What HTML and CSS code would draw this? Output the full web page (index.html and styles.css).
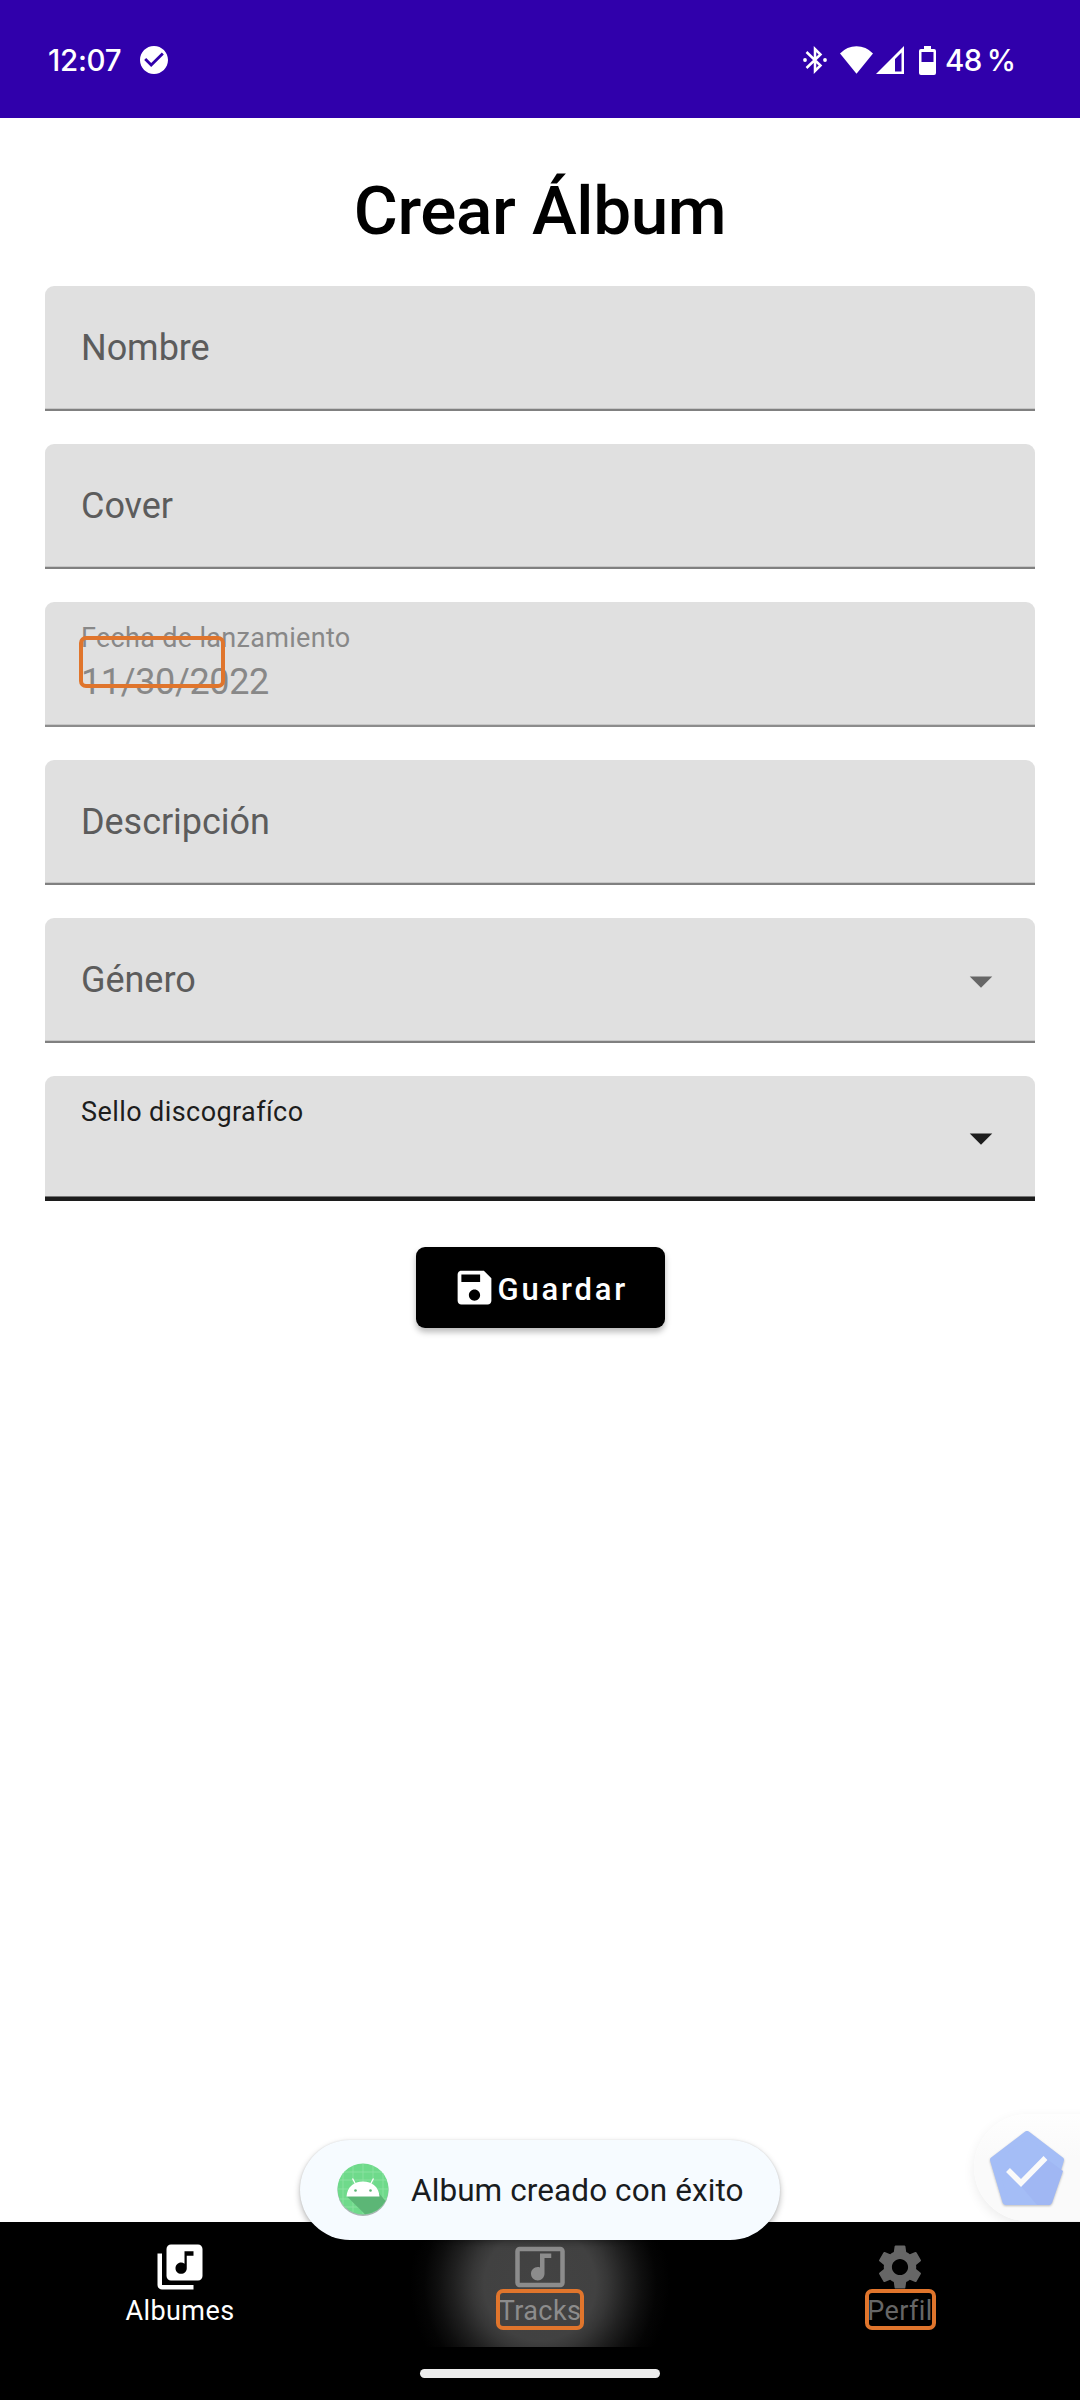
FILE: index.html
```html
<!DOCTYPE html>
<html lang="es">
<head>
<meta charset="utf-8">
<title>Crear Álbum</title>
<link rel="stylesheet" href="styles.css">
</head>
<body>
<div class="screen">
  <header class="status">
    <div class="status-left">
      <span class="clock">12:07</span>
      <svg class="ic-check" viewBox="2 2 20 20"><path fill="#fff" d="M12 2C6.48 2 2 6.48 2 12s4.48 10 10 10 10-4.48 10-10S17.52 2 12 2zm-2 15l-5-5 1.41-1.41L10 14.17l7.59-7.59L19 8l-9 9z"/></svg>
    </div>
    <div class="status-right">
      <svg class="ic-bt" viewBox="0 0 24 28" fill="none" stroke="#fff" stroke-width="2.5"><path d="M3.5 6 L17.5 19.5 L12 25 V3 L17.5 8.5 L3.5 22"/><circle cx="2" cy="14" r="1.9" fill="#fff" stroke="none"/><circle cx="22" cy="14" r="1.9" fill="#fff" stroke="none"/></svg>
      <svg class="ic-wifi" viewBox="0 0 33 28"><path fill="#fff" d="M0 7.5Q7 0.3 16.5 0.3T33 7.5L16.5 27.7z"/></svg>
      <svg class="ic-signal" viewBox="0 0 28 28"><path fill="#fff" fill-rule="evenodd" d="M28 0V28H0zM25.5 6.5L19 13V25.5H25.5z"/></svg>
      <svg class="ic-battery" viewBox="0 0 17 29"><path fill="#fff" fill-rule="evenodd" d="M5 0h7v3h3a2 2 0 0 1 2 2v22a2 2 0 0 1-2 2H2a2 2 0 0 1-2-2V5a2 2 0 0 1 2-2h3zM2.500 6v10h12V6z"/></svg>
      <span class="percent">48 %</span>
    </div>
  </header>

  <main class="content">
    <h1 class="title">Crear Álbum</h1>
    <form class="form">
      <div class="field"><span class="label">Nombre</span></div>
      <div class="field"><span class="label">Cover</span></div>
      <div class="field filled disabled">
        <span class="caption">Fecha de lanzamiento</span>
        <span class="value">11/30/2022</span>
        <i class="mark mark-date"></i>
      </div>
      <div class="field"><span class="label">Descripción</span></div>
      <div class="field">
        <span class="label">Género</span>
        <svg class="arrow" viewBox="0 0 24 24"><path fill="currentColor" d="M7 10l5 5 5-5z"/></svg>
      </div>
      <div class="field filled focused">
        <span class="caption">Sello discografíco</span>
        <svg class="arrow" viewBox="0 0 24 24"><path fill="currentColor" d="M7 10l5 5 5-5z"/></svg>
      </div>
      <button class="save" type="button">
        <svg class="save-icon" viewBox="0 0 24 24"><path fill="currentColor" d="M17 3H5c-1.110 0-2 .9-2 2v14c0 1.100.89 2 2 2h14c1.100 0 2-.9 2-2V7l-4-4zm-5 16c-1.660 0-3-1.340-3-3s1.340-3 3-3 3 1.340 3 3-1.340 3-3 3zm3-10H5V5h10v4z"/></svg>
        <span class="save-text">Guardar</span>
      </button>
    </form>
  </main>

  <nav class="nav">
    <div class="tabs">
      <a class="tab active">
        <svg class="tab-icon" viewBox="0 0 24 24"><path fill="currentColor" d="M20 2H8c-1.100 0-2 .9-2 2v12c0 1.100.9 2 2 2h12c1.100 0 2-.9 2-2V4c0-1.100-.9-2-2-2zm-2 5h-3v5.500c0 1.380-1.120 2.500-2.500 2.500S10 13.880 10 12.500s1.120-2.500 2.500-2.500c.57 0 1.080.19 1.500.51V5h4v2zM4 6H2v14c0 1.100.9 2 2 2h14v-2H4V6z"/></svg>
        <span class="tab-label">Albumes</span>
      </a>
      <a class="tab pressed">
        <svg class="tab-icon" viewBox="0 0 24 24"><path fill="currentColor" d="M21 3H3c-1.110 0-2 .89-2 2v14c0 1.100.89 2 2 2h18c1.100 0 2-.9 2-2V5c0-1.110-.9-2-2-2zm0 16H3V5h18v14zM8 15c0-1.660 1.340-3 3-3 .35 0 .69.07 1 .18V6h5v2h-3v7.030c-.02 1.640-1.350 2.970-3 2.970-1.660 0-3-1.340-3-3z"/></svg>
        <span class="tab-label">Tracks</span>
        <i class="mark mark-tracks"></i>
      </a>
      <a class="tab">
        <svg class="tab-icon" viewBox="0 0 24 24"><path fill="currentColor" d="M19.140,12.940c0.040-0.300,0.060-0.610,0.060-0.940c0-0.320-0.020-0.640-0.070-0.940l2.030-1.580c0.180-0.140,0.230-0.410,0.120-0.610l-1.920-3.320c-0.120-0.220-0.370-0.290-0.590-0.220l-2.390,0.960c-0.500-0.380-1.030-0.700-1.620-0.940L14.400,2.810c-0.040-0.240-0.240-0.410-0.480-0.410h-3.840c-0.240,0-0.430,0.170-0.470,0.410L9.250,5.350C8.660,5.590,8.120,5.920,7.630,6.290L5.240,5.330c-0.220-0.080-0.470,0-0.590,0.220L2.740,8.870C2.620,9.080,2.660,9.340,2.860,9.480l2.030,1.580C4.840,11.360,4.800,11.690,4.800,12s0.020,0.640,0.070,0.940l-2.030,1.580c-0.180,0.140-0.230,0.410-0.120,0.610l1.920,3.320c0.120,0.220,0.370,0.290,0.590,0.220l2.390-0.960c0.500,0.380,1.030,0.700,1.620,0.940l0.360,2.540c0.050,0.240,0.240,0.410,0.480,0.410h3.840c0.240,0,0.440-0.170,0.470-0.410l0.360-2.540c0.590-0.240,1.130-0.560,1.620-0.940l2.390,0.960c0.220,0.080,0.470,0,0.590-0.220l1.920-3.320c0.120-0.220,0.070-0.470-0.120-0.610L19.140,12.940z M12,15.600c-1.980,0-3.600-1.620-3.600-3.600s1.620-3.600,3.600-3.600s3.600,1.620,3.600,3.600S13.980,15.600,12,15.600z"/></svg>
        <span class="tab-label">Perfil</span>
        <i class="mark mark-perfil"></i>
      </a>
    </div>
    <div class="home-bar"></div>
  </nav>

  <div class="float-badge">
    <svg class="pentagon" viewBox="0 0 74 76">
      <path fill="#a4bdf6" stroke="#a4bdf6" stroke-width="6" stroke-linejoin="round" d="M37 4L71 30L58.5 72H15.5L3 30z"/>
      <path fill="#a0b7f3" d="M55.5 28L73 41L62 73L60 75H47L31 56z"/>
      <path fill="none" stroke="#fafafa" stroke-width="5.5" d="M18 40L31 53L55.5 28"/>
    </svg>
  </div>

  <div class="toast">
    <svg class="app-icon" viewBox="0 0 52 54">
      <circle cx="26" cy="27.5" r="25.5" fill="#a9b5b3"/>
      <circle cx="26" cy="26" r="25.5" fill="#6fda8b"/>
      <path d="M16 3V49M26 1V51M36 3V49M6 10V42M46 10V42M7 9H45M2 17H50M1 26H51M2 36H50M7 44H45" stroke="#8fe3a5" stroke-width="0.8" fill="none"/>
      <path fill="#5cb676" d="M10 33.5L28 51.3Q42 49.5 48.5 38L41.5 29.5z"/>
      <path fill="#fff" d="M9.500 33.500C10 24 17 18.500 26 18.500S42 24 42.500 33.500z"/>
      <path stroke="#fff" stroke-width="1.3" d="M18.5 21L15.5 15.5M33.5 21L36.5 15.5"/>
      <circle cx="18.5" cy="27.5" r="1.3" fill="#5cb676"/><circle cx="33.5" cy="27.5" r="1.3" fill="#5cb676"/>
    </svg>
    <span class="toast-text">Album creado con éxito</span>
  </div>
</div>
</body>
</html>
```
FILE: styles.css
```css
body {
  margin: 0;
  font-family: Roboto, sans-serif;
  background: #fff;
}

.screen {
  position: relative;
  display: flex;
  flex-direction: column;
  width: 1080px;
  height: 2400px;
  overflow: hidden;
}

svg {
  display: block;
  flex: none;
}

/* Status bar */
.status {
  display: flex;
  justify-content: space-between;
  flex: none;
  box-sizing: border-box;
  height: 118px;
  padding: 0 65px 0 48px;
  background: #3000ab;
  color: #fff;
  font-family: Inter, sans-serif;
  font-size: 29.5px;
  font-weight: 500;
  line-height: 36px;
}

.status-left,
.status-right {
  display: flex;
  align-items: center;
  height: 120px;
}

.clock { width: 92px; letter-spacing: -0.25px; }
.percent { width: 70px; letter-spacing: -0.5px; word-spacing: -2.5px; white-space: nowrap; }
.ic-check { width: 28px; height: 28px; }
.ic-bt { width: 24px; height: 28px; margin-right: 13px; }
.ic-wifi { width: 33px; height: 28px; margin-right: 3px; }
.ic-signal { width: 28px; height: 28px; margin-right: 15px; }
.ic-battery { width: 17px; height: 29px; margin-right: 9px; }

/* Form */
.content {
  flex: 1;
  padding: 0 45px;
}

.title {
  margin: 53px 0 36px;
  font-size: 67.5px;
  font-weight: 500;
  line-height: 79px;
  letter-spacing: -0.38px;
  text-align: center;
  color: #000;
}

.form {
  display: flex;
  flex-direction: column;
  gap: 33px;
}

.field {
  position: relative;
  display: flex;
  align-items: center;
  justify-content: space-between;
  box-sizing: border-box;
  height: 125px;
  padding: 0 27px 0 36px;
  border-radius: 9px 9px 0 0;
  background: linear-gradient(#808080, #808080) 0 100% / 100% 2px no-repeat,
              linear-gradient(#c6c6c6, #c6c6c6) 0 100% / 100% 3px no-repeat, #e0e0e0;
  color: #5c5c5c;
}

.label,
.value {
  font-size: 36px;
  line-height: 42px;
  letter-spacing: -0.05px;
}

.label { margin-bottom: 1px; }

.value {
  margin-top: 7px;
  letter-spacing: -0.36px;
}

.caption {
  font-size: 27px;
  line-height: 32px;
  letter-spacing: 0.31px;
}

.filled {
  flex-direction: column;
  align-items: flex-start;
  justify-content: flex-start;
  padding-top: 20px;
}

.disabled {
  background: linear-gradient(#8c8c8c, #8c8c8c) 0 100% / 100% 2px no-repeat,
              linear-gradient(#c6c6c6, #c6c6c6) 0 100% / 100% 3px no-repeat, #e0e0e0;
  color: #888;
}

.focused {
  flex-direction: row;
  justify-content: space-between;
  background: linear-gradient(#1c1c1c, #1c1c1c) 0 100% / 100% 4px no-repeat,
              linear-gradient(#777, #777) 0 100% / 100% 5px no-repeat, #e0e0e0;
  color: #1d1d1d;
}

.focused .caption { letter-spacing: 0.42px; }

.arrow {
  width: 54px;
  height: 54px;
  color: #666;
}

.focused .arrow {
  margin-top: 15px;
  color: #1d1d1d;
}

.save {
  display: flex;
  align-items: center;
  align-self: center;
  width: 249px;
  height: 81px;
  margin-top: 13px;
  padding: 0 0 0 36px;
  border: 0;
  border-radius: 9px;
  background: #000;
  color: #fff;
  font: 500 31px/36px Roboto, sans-serif;
  letter-spacing: 2.8px;
  box-shadow: 0 4px 6px rgba(0, 0, 0, 0.28);
}

.save-icon {
  width: 45px;
  height: 45px;
}

.save-text { padding: 4px 0 0 1px; }

/* Accessibility outlines */
.mark {
  position: absolute;
  box-sizing: border-box;
  border: 4px solid #e0752c;
  border-radius: 7px;
}

.mark-date { left: 34px; top: 34px; width: 146px; height: 52px; }
.mark-tracks { left: 136px; top: 67px; width: 88px; height: 41px; }
.mark-perfil { left: 145px; top: 67px; width: 71px; height: 41px; }

/* Bottom navigation */
.nav {
  flex: none;
  height: 178px;
  background: #000;
}

.tabs {
  display: grid;
  grid-template-columns: repeat(3, 1fr);
  height: 125px;
}

.tab {
  position: relative;
  display: flex;
  flex-direction: column;
  align-items: center;
  box-sizing: border-box;
  padding-top: 17.5px;
  color: #666;
}

.tab.active { color: #fff; }

.tab.pressed {
  color: #8c8c8c;
  background: radial-gradient(circle at 50% 50%, #434343 0, #414141 56px, #363636 68px, #202020 86px, #0f0f0f 102px, #040404 116px, #000 130px);
}

.tab-icon {
  width: 54px;
  height: 54px;
}

.tab-label {
  margin-top: 1px;
  font-size: 27px;
  line-height: 32px;
  letter-spacing: 0.42px;
}

.home-bar {
  width: 240px;
  height: 9px;
  margin: 22px auto 0;
  border-radius: 5px;
  background: #ececec;
}

/* Overlays */
.float-badge {
  position: absolute;
  left: 974px;
  top: 2114px;
  display: flex;
  align-items: center;
  box-sizing: border-box;
  width: 140px;
  height: 107px;
  padding-left: 16px;
  border-radius: 54px 0 0 54px;
  background: linear-gradient(#fefefe, #fafafa 40%);
  box-shadow: 0 4px 12px rgba(0, 0, 0, 0.08);
  clip-path: inset(-20px 0 -1px -30px);
}

.pentagon {
  width: 74px;
  height: 76px;
  filter: drop-shadow(0 1px 1px rgba(0, 0, 0, 0.25));
}

.toast {
  position: absolute;
  left: 300px;
  top: 2140px;
  display: flex;
  align-items: center;
  box-sizing: border-box;
  width: 480px;
  height: 100px;
  padding-left: 37px;
  border-radius: 50px;
  background: #f6fbff;
  box-shadow: 0 3px 6px rgba(0, 0, 0, 0.28), 0 0 2px rgba(0, 0, 0, 0.1);
}

.app-icon {
  width: 52px;
  height: 54px;
}

.toast-text {
  margin: 2px 0 0 22px;
  font-size: 31.5px;
  line-height: 38px;
  letter-spacing: 0.09px;
  white-space: nowrap;
  color: #191c1e;
}
```
